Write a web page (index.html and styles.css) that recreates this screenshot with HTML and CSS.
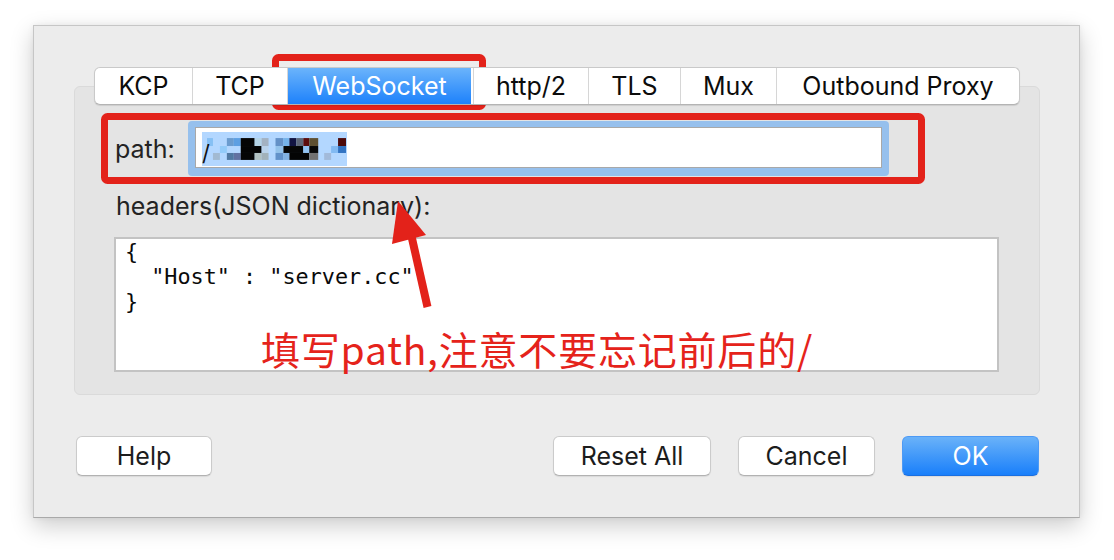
FILE: index.html
```html
<!DOCTYPE html>
<html lang="zh-CN">
<head>
<meta charset="utf-8">
<title>Transport Settings</title>
<link rel="stylesheet" href="styles.css">
</head>
<body>
<div class="dialog">
  <div class="tabview">
    <div class="tabbar">
      <div class="tab t-kcp">KCP</div>
      <div class="tab t-tcp">TCP</div>
      <div class="tab t-ws active">WebSocket</div>
      <div class="tab t-h2">http/2</div>
      <div class="tab t-tls">TLS</div>
      <div class="tab t-mux">Mux</div>
      <div class="tab t-proxy">Outbound Proxy</div>
    </div>
    <div class="box">
      <div class="path-row">
        <div class="label path-label">path:</div>
        <div class="focus-ring">
          <div class="field">
            <div class="selection">
              <span class="slash">/</span>
              <svg class="mosaic" width="141" height="34" viewBox="0 0 141 34">
                <!-- row 1 -->
                <rect x="0" y="6" width="6" height="8" fill="#86c0f4"/>
                <rect x="20" y="6" width="7" height="8" fill="#6b9ccf"/>
                <rect x="27" y="6" width="7" height="8" fill="#5d9fe2"/>
                <rect x="34" y="6" width="14" height="8" fill="#050505"/>
                <rect x="48" y="6" width="7" height="8" fill="#b4d3e6"/>
                <rect x="55" y="6" width="7" height="8" fill="#a3b2c2"/>
                <rect x="69" y="6" width="8" height="8" fill="#6491c7"/>
                <rect x="77" y="6" width="6" height="8" fill="#75b3ea"/>
                <rect x="83" y="6" width="7" height="8" fill="#121442"/>
                <rect x="90" y="6" width="7" height="8" fill="#5f6878"/>
                <rect x="97" y="6" width="6" height="8" fill="#5c0c0c"/>
                <rect x="103" y="6" width="9" height="8" fill="#5e5032"/>
                <rect x="132" y="6" width="8" height="8" fill="#4c0a0a"/>
                <!-- row 2 -->
                <rect x="13" y="14" width="7" height="7" fill="#93cbf9"/>
                <rect x="34" y="14" width="21" height="7" fill="#040404"/>
                <rect x="55" y="14" width="7" height="7" fill="#b9d2ea"/>
                <rect x="69" y="14" width="8" height="7" fill="#93c2ea"/>
                <rect x="77" y="14" width="20" height="7" fill="#060606"/>
                <rect x="97" y="14" width="6" height="7" fill="#92c3f2"/>
                <rect x="103" y="14" width="9" height="7" fill="#080808"/>
                <rect x="125" y="14" width="7" height="7" fill="#82baf2"/>
                <rect x="132" y="14" width="8" height="7" fill="#3273c2"/>
                <!-- row 3 -->
                <rect x="6" y="21" width="7" height="7" fill="#a2bad2"/>
                <rect x="20" y="21" width="7" height="7" fill="#5179a2"/>
                <rect x="27" y="21" width="7" height="7" fill="#6272a2"/>
                <rect x="34" y="21" width="14" height="7" fill="#050505"/>
                <rect x="48" y="21" width="7" height="7" fill="#b2c2c2"/>
                <rect x="55" y="21" width="7" height="7" fill="#a2b2ba"/>
                <rect x="69" y="21" width="8" height="7" fill="#6292ca"/>
                <rect x="77" y="21" width="6" height="7" fill="#82b2e2"/>
                <rect x="83" y="21" width="20" height="7" fill="#040404"/>
                <rect x="103" y="21" width="9" height="7" fill="#727272"/>
                <rect x="118" y="21" width="7" height="7" fill="#a2bada"/>
              </svg>
            </div>
          </div>
        </div>
      </div>
      <div class="label headers-label">headers(JSON dictionary):</div>
      <div class="textarea">{
  "Host" : "server.cc"
}</div>
    </div>
  </div>
  <div class="buttons">
    <div class="btn btn-help">Help</div>
    <div class="spacer"></div>
    <div class="btn btn-reset">Reset All</div>
    <div class="btn btn-cancel">Cancel</div>
    <div class="btn btn-ok">OK</div>
  </div>
</div>

<div class="annotations">
  <svg class="annot-svg" width="1114" height="560" viewBox="0 0 1114 560">
    <rect x="275.5" y="57.5" width="207" height="49" rx="3" ry="3" fill="none" stroke="#e3221a" stroke-width="7"/>
    <rect x="104.5" y="116.5" width="817" height="64" rx="3" ry="3" fill="none" stroke="#e3221a" stroke-width="7"/>
    <line x1="411" y1="234" x2="427.5" y2="307" stroke="#e3221a" stroke-width="8"/>
    <polygon points="398,201 392,244 426,235" fill="#e3221a"/>
  </svg>
  <div class="note">填写path,注意不要忘记前后的/</div>
</div>
</body>
</html>
```

FILE: styles.css
```css
html, body {
  margin: 0;
  padding: 0;
}

body {
  width: 1114px;
  height: 560px;
  overflow: hidden;
  background: #ffffff;
  font-family: "Inter", "Liberation Sans", "Noto Sans CJK SC", sans-serif;
  color: #1f1f1f;
  position: relative;
}

.dialog {
  box-sizing: border-box;
  width: 1047px;
  height: 493px;
  margin: 25px 0 0 33px;
  background: #ececec;
  border: 1px solid #c6c6c6;
  border-bottom-color: #a9a9a9;
  box-shadow: 0 8px 22px rgba(0, 0, 0, 0.20), 0 0 6px rgba(0, 0, 0, 0.06);
  padding: 41px 39px 0 40px;
  display: flex;
  flex-direction: column;
}

.tabview {
  display: flex;
  flex-direction: column;
  align-items: center;
}

.tabbar {
  position: relative;
  z-index: 1;
  box-sizing: border-box;
  width: 926px;
  height: 38px;
  display: flex;
  background: #ffffff;
  border: 1px solid #c9c9c9;
  border-bottom-color: #b4b4b4;
  border-radius: 6px;
  box-shadow: 0 1px 1px rgba(0, 0, 0, 0.10);
  overflow: hidden;
}

.tab {
  box-sizing: border-box;
  flex: none;
  display: flex;
  align-items: center;
  justify-content: center;
  font-size: 25px;
  color: #0c0c0c;
  border-left: 1px solid #d6d6d6;
}

.t-kcp { width: 97px; border-left: none; }
.t-tcp { width: 95px; }
.t-ws { width: 186px; }
.t-h2 { width: 115px; }
.t-tls { width: 92px; }
.t-mux { width: 96px; }
.t-proxy { width: 243px; }

.tab.active {
  color: #ffffff;
  background: linear-gradient(#6db5fb, #1b80fb);
  border-right: 2px solid #ffffff;
  margin-top: -1px;
  height: 38px;
}

.box {
  box-sizing: border-box;
  width: 966px;
  height: 309px;
  margin-top: -19px;
  background: #e4e4e4;
  border: 1px solid #dadada;
  border-radius: 6px;
  padding: 34px 0 0 40px;
  display: flex;
  flex-direction: column;
}

.label {
  font-size: 25px;
  line-height: 30px;
  color: #232323;
}

.path-row {
  display: flex;
  align-items: center;
}

.path-label {
  width: 73px;
  flex: none;
}

.focus-ring {
  box-sizing: border-box;
  width: 701px;
  padding: 6px 7px 8px 7px;
  background: #96c0ed;
  border-radius: 4px;
}

.field {
  box-sizing: border-box;
  height: 41px;
  background: #ffffff;
  border: 1px solid #a8a8a8;
  padding: 4px 6px 0 6px;
  display: flex;
}

.selection {
  height: 34px;
  width: 145px;
  background: #b3d7ff;
  display: flex;
  align-items: center;
}

.slash {
  font-size: 22px;
  line-height: 34px;
  width: 4px;
  color: #111;
  display: inline-block;
  transform: translateY(4px);
}

.mosaic {
  display: block;
  margin-left: 1px;
}

.headers-label {
  margin: 15px 0 0 1px;
}

.textarea {
  box-sizing: border-box;
  width: 885px;
  height: 135px;
  margin: 16px 0 0 -1px;
  background: #ffffff;
  border: 2px solid #c3c3c3;
  padding: 0 0 0 9px;
  font-family: "DejaVu Sans Mono", "Liberation Mono", monospace;
  font-size: 21.8px;
  line-height: 25px;
  color: #0a0a0a;
  white-space: pre;
}

.buttons {
  display: flex;
  align-items: center;
  margin: 41px 1px 0 2px;
}

.spacer {
  flex: 1;
}

.btn {
  box-sizing: border-box;
  height: 40px;
  display: flex;
  align-items: center;
  justify-content: center;
  font-size: 25px;
  color: #1c1c1c;
  background: #ffffff;
  border: 1px solid #cbcbcb;
  border-bottom-color: #b2b2b2;
  border-radius: 6px;
  box-shadow: 0 1px 1px rgba(0, 0, 0, 0.08);
}

.btn-help { width: 136px; }
.btn-reset { width: 158px; }
.btn-cancel { width: 137px; margin-left: 27px; }
.btn-ok {
  width: 137px;
  margin-left: 27px;
  color: #ffffff;
  background: linear-gradient(#6ab2f9, #197ffa);
  border-color: #4d9af5;
  border-bottom-color: #1a6fe0;
}

.annotations {
  position: absolute;
  left: 0;
  top: 0;
  width: 1114px;
  height: 560px;
  pointer-events: none;
}

.annot-svg {
  position: absolute;
  left: 0;
  top: 0;
}

.note {
  position: absolute;
  left: 261px;
  top: 329px;
  font-family: "Noto Sans CJK SC", "Noto Sans", sans-serif;
  font-size: 39px;
  line-height: 39px;
  letter-spacing: 0.8px;
  color: #e5231b;
  white-space: nowrap;
}
```
